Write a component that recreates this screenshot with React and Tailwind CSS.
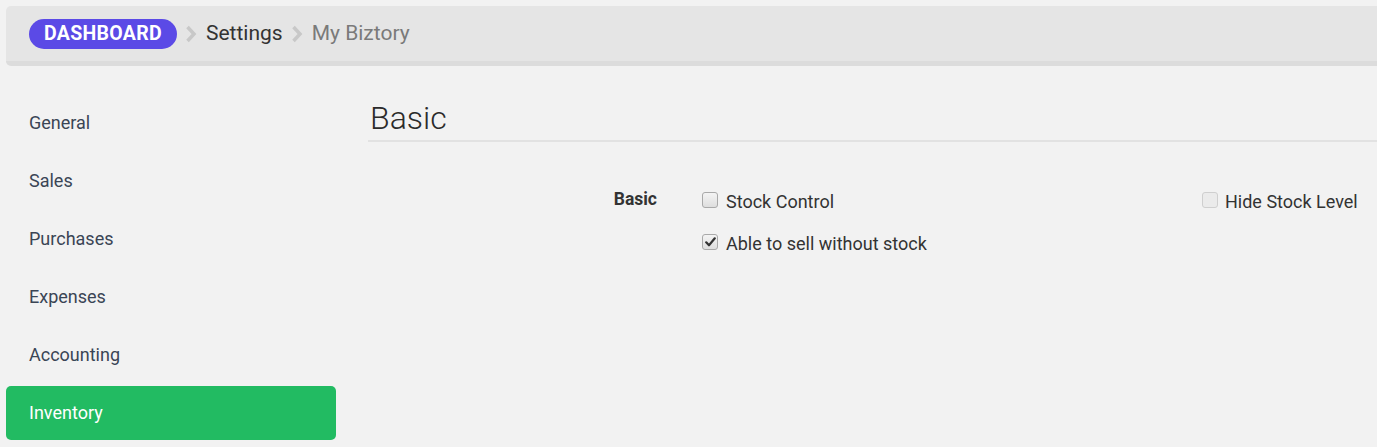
import React from "react";

function Box({ checked, disabled }) {
  return (
    <span
      className={
        "mt-[2px] flex h-4 w-4 shrink-0 items-center justify-center rounded-[3px] border " +
        (disabled
          ? "border-[#cfcfcf] bg-[#ebebeb]"
          : "border-[#a9a9a9] bg-gradient-to-b from-[#f4f4f4] to-[#dedede]")
      }
    >
      {checked && (
        <svg width="11" height="10" viewBox="0 0 11 10">
          <path d="M1.2 5.3 L4 8.3 L9.8 1.3" fill="none" stroke="#333" strokeWidth="2.2" strokeLinecap="round" strokeLinejoin="round" />
        </svg>
      )}
    </span>
  );
}

function Chevron() {
  return (
    <svg width="12" height="18" viewBox="0 0 12 18" className="ml-[8px] mr-[9px]">
      <path d="M2.5 2 L9 9 L2.5 16" fill="none" stroke="#c8c8c8" strokeWidth="3.5" strokeLinejoin="miter" />
    </svg>
  );
}

export default function App() {
  const items = ["General", "Sales", "Purchases", "Expenses", "Accounting", "Inventory"];
  return (
    <div className="min-h-[447px] w-full overflow-hidden bg-[#f2f2f2] pt-[6px] pl-[6px]" style={{ fontFamily: "Roboto, 'Noto Sans', sans-serif" }}>
      <div className="flex h-[60px] items-center rounded-tl-[5px] rounded-bl-[5px] border-b-[5px] border-[#dcdcdc] bg-[#e5e5e5] pl-[23px]">
        <span className="flex h-[30px] w-[148px] items-center justify-center rounded-full bg-[#5b4ae6] text-[19.5px] font-bold tracking-[0.3px] text-white">
          DASHBOARD
        </span>
        <Chevron />
        <span className="text-[21px] text-[#333]">Settings</span>
        <Chevron />
        <span className="text-[21px] text-[#7a7a7a]">My Biztory</span>
      </div>
      <div className="flex">
        <div className="w-[330px] shrink-0 pt-[30px]">
          {items.map((it) => (
            <div
              key={it}
              className={
                "flex h-[54px] items-center rounded-[5px] pl-[23px] pb-[2px] text-[18px] mb-[4px] " +
                (it === "Inventory" ? "bg-[#22bb62] text-white" : "text-[#3a4555]")
              }
            >
              {it}
            </div>
          ))}
        </div>
        <div className="ml-[32px] flex-1 pt-[32px]">
          <div className="border-b-2 border-[#e2e2e2] pb-[2px] pl-[2px] text-[32px] font-light leading-[40px] text-[#2b2b2b]">
            Basic
          </div>
          <div className="flex pt-[48px]">
            <div className="-mt-[4px] w-[333px] shrink-0 pr-[44px] text-right text-[17.5px] font-bold text-[#333]">Basic</div>
            <div className="ml-[1px] flex w-[500px] shrink-0 flex-col gap-[18px]">
              <label className="flex items-start gap-[8px] text-[18px] leading-[24px] text-[#333]">
                <Box />
                <span>Stock Control</span>
              </label>
              <label className="flex items-start gap-[8px] text-[18px] leading-[24px] text-[#333]">
                <Box checked />
                <span>Able to sell without stock</span>
              </label>
            </div>
            <label className="flex items-start gap-[7px] text-[18px] leading-[24px] text-[#333]">
              <Box disabled />
              <span className="whitespace-nowrap">Hide Stock Level</span>
            </label>
          </div>
        </div>
      </div>
    </div>
  );
}
